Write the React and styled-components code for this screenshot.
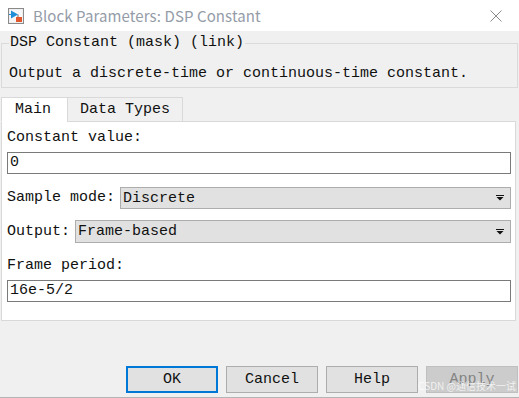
import styled, { createGlobalStyle } from "styled-components";

const GlobalStyle = createGlobalStyle`
	html, body {
		margin: 0;
		padding: 0;
		background: #f0f0f0;
	}
	* {
		box-sizing: border-box;
	}
`;

const MONO = `"Liberation Mono", "DejaVu Sans Mono", monospace`;

function BlockIcon() {
	return (
		<svg width="16" height="16" viewBox="0 0 16 16">
			<rect x="0.5" y="0.5" width="15" height="15" fill="#e8e8e8" stroke="#8a8a8a" />
			<rect x="1.5" y="1.5" width="13" height="13" fill="#f6f6f6" />
			<path d="M3 2.5 L10 6.5 L3 10.5 Z" fill="#1e8fd6" />
			<line x1="1" y1="6.5" x2="3" y2="6.5" stroke="#1e8fd6" />
			<line x1="10" y1="6.5" x2="10" y2="9" stroke="#666" />
			<rect x="8" y="9" width="6" height="5" fill="#e2572b" />
		</svg>
	);
}

function CloseIcon() {
	return (
		<svg width="12" height="12" viewBox="0 0 12 12">
			<path d="M0.5 0.5 L11.5 11.5 M11.5 0.5 L0.5 11.5" stroke="#8c8c8c" strokeWidth="1" fill="none" />
		</svg>
	);
}

function Arrow() {
	return (
		<svg width="8" height="6" viewBox="0 0 8 6">
			<rect x="0" y="0" width="8" height="1" fill="#111" />
			<path d="M0.5 2 L7.5 2 L4 5.5 Z" fill="#111" />
		</svg>
	);
}

function Select({ value }) {
	return (
		<SelectBox>
			<span>{value}</span>
			<Arrow />
		</SelectBox>
	);
}

export default function App() {
	return (
		<Window>
			<GlobalStyle />
			<TitleBar>
				<BlockIcon />
				<Title>Block Parameters: DSP Constant</Title>
				<CloseButton>
					<CloseIcon />
				</CloseButton>
			</TitleBar>

			<Body>
				<Group>
					<legend>DSP Constant (mask) (link)</legend>
					<p>Output a discrete-time or continuous-time constant.</p>
				</Group>

				<Tabs>
					<Tab $active>Main</Tab>
					<Tab>Data Types</Tab>
				</Tabs>

				<Panel>
					<Label>Constant value:</Label>
					<TextField $top={5}>0</TextField>

					<Row $top={13}>
						<Label>Sample mode:</Label>
						<Select value="Discrete" />
					</Row>

					<Row $top={11} $height={23}>
						<Label>Output:</Label>
						<Select value="Frame-based" />
					</Row>

					<Label $top={14}>Frame period:</Label>
					<TextField $top={5}>16e-5/2</TextField>
				</Panel>

				<Buttons>
					<Button $focused>OK</Button>
					<Button>Cancel</Button>
					<Button>Help</Button>
					<Button $disabled>
						Apply
						<Watermark>CSDN @通信技术一试</Watermark>
					</Button>
				</Buttons>
			</Body>
		</Window>
	);
}

const Window = styled.div`
	width: 519px;
	height: 398px;
	display: flex;
	flex-direction: column;
	background: #f0f0f0;
	border-bottom: 1px solid #b4b4b4;
	overflow: hidden;
`;

const TitleBar = styled.div`
	height: 31px;
	flex-shrink: 0;
	display: flex;
	align-items: center;
	padding-left: 8px;
	background: #ffffff;

	svg {
		flex-shrink: 0;
	}
`;

const Title = styled.span`
	margin-left: 9px;
	font-family: "Noto Sans CJK SC", "Noto Sans", sans-serif;
	font-size: 15px;
	color: #949ca8;
	letter-spacing: 0.1px;
`;

const CloseButton = styled.div`
	margin-left: auto;
	width: 46px;
	height: 31px;
	display: flex;
	align-items: center;
	justify-content: center;
`;

const Body = styled.div`
	flex: 1;
	display: flex;
	flex-direction: column;
	font-family: ${MONO};
	font-size: 15px;
	color: #111;
`;

const Group = styled.fieldset`
	margin: 3px 1px 0 1px;
	padding: 0 8px 4px 7px;
	border: 1px solid #dadada;
	min-width: 0;

	legend {
		padding: 0 1px;
		line-height: 18px;
		font-size: 15px;
	}

	p {
		margin: 13px 0 0 0;
		line-height: 18px;
		white-space: nowrap;
	}
`;

const Tabs = styled.div`
	display: flex;
	margin: 9px 0 0 1px;
	height: 24px;
	position: relative;
	z-index: 1;
`;

const Tab = styled.div`
	height: 25px;
	padding: 0 12px 0 ${(p) => (p.$active ? "13px" : "12px")};
	display: flex;
	align-items: center;
	line-height: 18px;
	background: ${(p) => (p.$active ? "#ffffff" : "#f0f0f0")};
	border: 1px solid #d9d9d9;
	border-bottom: ${(p) => (p.$active ? "1px solid #ffffff" : "1px solid #d9d9d9")};
	margin-left: ${(p) => (p.$active ? "0" : "-1px")};
	width: ${(p) => (p.$active ? "67px" : "116px")};
`;

const Panel = styled.div`
	margin: 0 3px 0 1px;
	height: 200px;
	display: flex;
	flex-direction: column;
	padding: 7px 4px 0 5px;
	background: #ffffff;
	border: 1px solid #d9d9d9;
`;

const Label = styled.div`
	line-height: 18px;
	margin-top: ${(p) => p.$top || 0}px;
	white-space: nowrap;
	flex-shrink: 0;
`;

const TextField = styled.div`
	height: 22px;
	margin-top: ${(p) => p.$top || 0}px;
	padding-left: 2px;
	line-height: 20px;
	border: 1px solid #7a7a7a;
	background: #ffffff;
`;

const Row = styled.div`
	display: flex;
	align-items: center;
	gap: 5px;
	height: ${(p) => p.$height || 22}px;
	margin-top: ${(p) => p.$top || 0}px;
`;

const SelectBox = styled.div`
	flex: 1;
	height: 100%;
	display: flex;
	align-items: center;
	justify-content: space-between;
	padding: 0 6px 0 2px;
	background: #e1e1e1;
	border: 1px solid #adadad;
`;

const Buttons = styled.div`
	margin-top: auto;
	margin-bottom: 4px;
	display: flex;
	justify-content: flex-end;
	gap: 8px;
	padding-right: 1px;
`;

const Button = styled.div`
	position: relative;
	width: 92px;
	height: 27px;
	display: flex;
	align-items: center;
	justify-content: center;
	background: ${(p) => (p.$disabled ? "#cccccc" : "#e1e1e1")};
	color: ${(p) => (p.$disabled ? "#838383" : "#111")};
	border: ${(p) => (p.$focused ? "2px solid #0078d7" : p.$disabled ? "1px solid #bfbfbf" : "1px solid #adadad")};
	font-size: 15px;
`;

const Watermark = styled.span`
	position: absolute;
	right: 1px;
	top: 11px;
	font-family: "Noto Sans CJK SC", "Noto Sans", sans-serif;
	font-size: 10px;
	color: rgba(255, 255, 255, 0.75);
	white-space: nowrap;
	pointer-events: none;
`;
